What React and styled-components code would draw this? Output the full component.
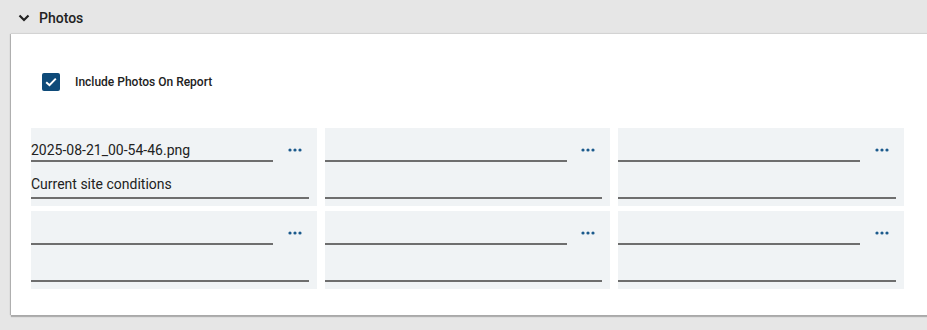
import React from "react";
import styled, { createGlobalStyle } from "styled-components";

const Global = createGlobalStyle`
  html, body { margin: 0; padding: 0; background: #e6e6e6; overflow: hidden; }
  body { font-family: Roboto, "Liberation Sans", Arial, sans-serif; color: #222; }
`;

const Page = styled.div`
  width: 927px;
  height: 330px;
  padding-left: 11px;
  box-sizing: border-box;
  overflow: hidden;
`;

const Header = styled.div`
  height: 34px;
  display: flex;
  align-items: center;
  gap: 9px;
  padding-left: 7px;
  padding-top: 1px;
  box-sizing: border-box;
  font-size: 14px;
  font-weight: 500;
  color: #222;
`;

const Panel = styled.section`
  background: #fff;
  margin-right: -40px;
  padding: 39px 0 26px 20px;
  box-shadow: -1px 0 1px rgba(0, 0, 0, 0.2), 0 2px 1px rgba(0, 0, 0, 0.24), 0 -1px 1px rgba(0, 0, 0, 0.05);
`;

const CheckRow = styled.label`
  display: flex;
  align-items: center;
  gap: 15px;
  padding-left: 11px;
  font-size: 12px;
  font-weight: 500;
  color: #222;
  height: 18px;
`;

const Box = styled.span`
  width: 18px;
  height: 18px;
  border-radius: 2px;
  background: #0e4a79;
  display: flex;
  align-items: center;
  justify-content: center;
`;

const Grid = styled.div`
  margin-top: 37px;
  width: 873px;
  display: grid;
  grid-template-columns: repeat(3, 1fr);
  column-gap: 8px;
  row-gap: 5px;
`;

const Cell = styled.div`
  background: #f0f3f5;
  padding: 12px 0 7px 0;
  height: 78px;
  box-sizing: border-box;
`;

const TopRow = styled.div`
  display: flex;
  align-items: center;
`;

const Field = styled.div`
  font-size: 14px;
  line-height: 20px;
  height: 20px;
  color: #222;
  border-bottom: 2px solid #6e6e6e;
  white-space: nowrap;
  overflow: hidden;
  padding-bottom: ${(p) => p.$pb || 0}px;
`;

const NameField = styled(Field)`
  width: 242px;
  flex: none;
`;

const DescField = styled(Field)`
  margin: 12px 8px 0 0;
`;

const MoreButton = styled.button`
  flex: 1;
  height: 22px;
  border: 0;
  background: transparent;
  padding: 0;
  display: flex;
  align-items: center;
  justify-content: center;
  margin-top: -2px;
  cursor: pointer;
`;

const Chevron = () => (
  <svg width="12" height="8" viewBox="0 0 12 8">
    <path d="M1.5 1.5 L6 6 L10.5 1.5" fill="none" stroke="#222" strokeWidth="2.2" />
  </svg>
);

const Check = () => (
  <svg width="12" height="10" viewBox="0 0 12 10">
    <path d="M1.2 5.2 L4.5 8.2 L10.8 1.6" fill="none" stroke="#fff" strokeWidth="2" />
  </svg>
);

const Dots = () => (
  <svg width="14" height="4" viewBox="0 0 14 4">
    <circle cx="2" cy="2" r="1.6" fill="#1b5a8c" />
    <circle cx="7" cy="2" r="1.6" fill="#1b5a8c" />
    <circle cx="12" cy="2" r="1.6" fill="#1b5a8c" />
  </svg>
);

const photos = [
  { name: "2025-08-21_00-54-46.png", desc: "Current site conditions" },
  { name: "", desc: "" },
  { name: "", desc: "" },
  { name: "", desc: "" },
  { name: "", desc: "" },
  { name: "", desc: "" },
];

export default function App() {
  return (
    <Page>
      <Global />
      <Header>
        <Chevron />
        <span>Photos</span>
      </Header>
      <Panel>
        <CheckRow>
          <Box>
            <Check />
          </Box>
          Include Photos On Report
        </CheckRow>
        <Grid>
          {photos.map((p, i) => (
            <Cell key={i}>
              <TopRow>
                <NameField>{p.name}</NameField>
                <MoreButton aria-label="More">
                  <Dots />
                </MoreButton>
              </TopRow>
              <DescField $pb={3}>{p.desc}</DescField>
            </Cell>
          ))}
        </Grid>
      </Panel>
    </Page>
  );
}
